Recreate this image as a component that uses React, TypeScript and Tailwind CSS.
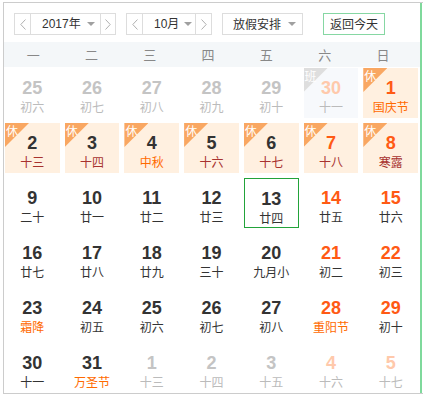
import React from "react";

type Cell = {
  n: number;
  l: string;
  k?: "prev" | "next";
  w?: boolean;
  b?: "休" | "班";
  f?: boolean;
  t?: boolean;
};

const rows: Cell[][] = [
  [
    { n: 25, l: "初六", k: "prev" },
    { n: 26, l: "初七", k: "prev" },
    { n: 27, l: "初八", k: "prev" },
    { n: 28, l: "初九", k: "prev" },
    { n: 29, l: "初十", k: "prev" },
    { n: 30, l: "十一", k: "prev", w: true, b: "班" },
    { n: 1, l: "国庆节", w: true, b: "休", f: true },
  ],
  [
    { n: 2, l: "十三", b: "休" },
    { n: 3, l: "十四", b: "休" },
    { n: 4, l: "中秋", b: "休", f: true },
    { n: 5, l: "十六", b: "休" },
    { n: 6, l: "十七", b: "休" },
    { n: 7, l: "十八", b: "休", w: true },
    { n: 8, l: "寒露", b: "休", w: true },
  ],
  [
    { n: 9, l: "二十" },
    { n: 10, l: "廿一" },
    { n: 11, l: "廿二" },
    { n: 12, l: "廿三" },
    { n: 13, l: "廿四", t: true },
    { n: 14, l: "廿五", w: true },
    { n: 15, l: "廿六", w: true },
  ],
  [
    { n: 16, l: "廿七" },
    { n: 17, l: "廿八" },
    { n: 18, l: "廿九" },
    { n: 19, l: "三十" },
    { n: 20, l: "九月小" },
    { n: 21, l: "初二", w: true },
    { n: 22, l: "初三", w: true },
  ],
  [
    { n: 23, l: "霜降", f: true },
    { n: 24, l: "初五" },
    { n: 25, l: "初六" },
    { n: 26, l: "初七" },
    { n: 27, l: "初八" },
    { n: 28, l: "重阳节", w: true, f: true },
    { n: 29, l: "初十", w: true },
  ],
  [
    { n: 30, l: "十一" },
    { n: 31, l: "万圣节", f: true },
    { n: 1, l: "十三", k: "next" },
    { n: 2, l: "十四", k: "next" },
    { n: 3, l: "十五", k: "next" },
    { n: 4, l: "十六", k: "next", w: true },
    { n: 5, l: "十七", k: "next", w: true },
  ],
];

const weekdays = ["一", "二", "三", "四", "五", "六", "日"];

function Chevron({ dir }: { dir: "l" | "r" }) {
  return (
    <svg width="6" height="11" viewBox="0 0 6 11" className="block">
      <polyline
        points={dir === "l" ? "5.5,0.5 0.8,5.5 5.5,10.5" : "0.5,0.5 5.2,5.5 0.5,10.5"}
        fill="none"
        stroke="#b0b0b0"
        strokeWidth="1"
      />
    </svg>
  );
}

function Caret() {
  return (
    <svg width="8" height="4" viewBox="0 0 8 4" className="block">
      <polygon points="0,0 8,0 4,4" fill="#a0a0a0" />
    </svg>
  );
}

function DayCell({ c }: { c: Cell }) {
  const dim = !!c.k;
  let numColor = "text-[#333333]";
  if (dim) numColor = c.w ? "text-[#ffc9ab]" : "text-[#c4c4c4]";
  else if (c.w) numColor = "text-[#ff5a14]";

  let lunColor = "text-[#333333]";
  if (dim) lunColor = "text-[#bbbbbb]";
  else if (c.f) lunColor = "text-[#ff6a00]";
  else if (c.b === "休") lunColor = "text-[#a8322f]";

  let bg = "bg-white";
  if (c.b === "休") bg = "bg-[#fff0e0]";
  else if (c.b === "班") bg = "bg-[#f7f9fc]";

  return (
    <div
      className={`relative h-[50px] flex flex-col items-center pt-[10px] ${bg} ${
        c.t ? "border border-[#22a33a] pt-[9px]" : ""
      }`}
    >
      {c.b && (
        <div className="absolute left-0 top-0 w-[24px] h-[24px]">
          <div
            className={`absolute inset-0 ${c.b === "休" ? "bg-[#f9a762]" : "bg-[#dedede]"}`}
            style={{ clipPath: "polygon(0 0, 100% 0, 0 100%)" }}
          />
          <span className="absolute left-[1px] top-[0px] text-[12px] leading-[15px] text-white font-['Noto_Sans_CJK_SC',sans-serif]">
            {c.b}
          </span>
        </div>
      )}
      <div
        className={`relative text-[18px] leading-[20px] font-bold font-['Liberation_Sans',Arial,sans-serif] ${numColor}`}
      >
        {c.n}
      </div>
      <div
        className={`relative mt-[1px] text-[12px] leading-[16px] font-['Noto_Sans_CJK_SC',sans-serif] ${lunColor}`}
      >
        {c.l}
      </div>
    </div>
  );
}

export default function App() {
  return (
    <div className="w-[423px] h-[397px] bg-white font-['Liberation_Sans','Noto_Sans_CJK_SC',sans-serif]">
      <div className="ml-[3px] mt-[2px] w-[420px] h-[392px] border-l border-t border-b border-[#cccccc] flex">
        <div className="w-[416px] flex flex-col">
          {/* toolbar */}
          <div className="h-[40px] pt-[10px] pl-[10px] flex items-start">
            <div className="h-[22px] w-[102px] border border-[#dddddd] flex items-stretch">
              <div className="w-[16px] flex items-center justify-center border-r border-[#dddddd]">
                <Chevron dir="l" />
              </div>
              <div className="flex-1 flex items-center pl-[11px] gap-[6px]">
                <span className="text-[12px] text-[#333] font-['Liberation_Sans','Noto_Sans_CJK_SC',sans-serif]">2017年</span>
                <Caret />
              </div>
              <div className="w-[15px] flex items-center justify-center border-l border-[#dddddd]">
                <Chevron dir="r" />
              </div>
            </div>
            <div className="ml-[10px] h-[22px] w-[86px] border border-[#dddddd] flex items-stretch">
              <div className="w-[16px] flex items-center justify-center border-r border-[#dddddd]">
                <Chevron dir="l" />
              </div>
              <div className="flex-1 flex items-center pl-[11px] gap-[5px]">
                <span className="text-[12px] text-[#333] font-['Liberation_Sans','Noto_Sans_CJK_SC',sans-serif]">10月</span>
                <Caret />
              </div>
              <div className="w-[16px] flex items-center justify-center border-l border-[#dddddd]">
                <Chevron dir="r" />
              </div>
            </div>
            <div className="ml-[10px] h-[22px] w-[81px] border border-[#dddddd] flex items-center pl-[10px] gap-[7px]">
              <span className="text-[12px] text-[#333] font-['Noto_Sans_CJK_SC',sans-serif]">放假安排</span>
              <Caret />
            </div>
            <div className="ml-[20px] h-[22px] w-[62px] border border-[#86d7a3] flex items-center justify-center">
              <span className="text-[12px] text-[#333] font-['Noto_Sans_CJK_SC',sans-serif]">返回今天</span>
            </div>
          </div>
          {/* weekday header */}
          <div className="h-[25px] bg-[#f4f7f9] flex w-[416px]">
            {weekdays.map((d) => (
              <div
                key={d}
                className="w-[58.3px] shrink-0 flex items-center justify-center text-[13px] text-[#888] font-['Noto_Sans_CJK_SC',sans-serif]"
              >
                {d}
              </div>
            ))}
          </div>
          {/* days */}
          <div className="mt-[1px] pl-[1px] w-[414px] grid grid-cols-7 gap-x-[5px] gap-y-[5px]">
            {rows.flat().map((c, i) => (
              <DayCell key={i} c={c} />
            ))}
          </div>
        </div>
        <div className="w-[2px] bg-[#7fd99c]" />
      </div>
    </div>
  );
}
